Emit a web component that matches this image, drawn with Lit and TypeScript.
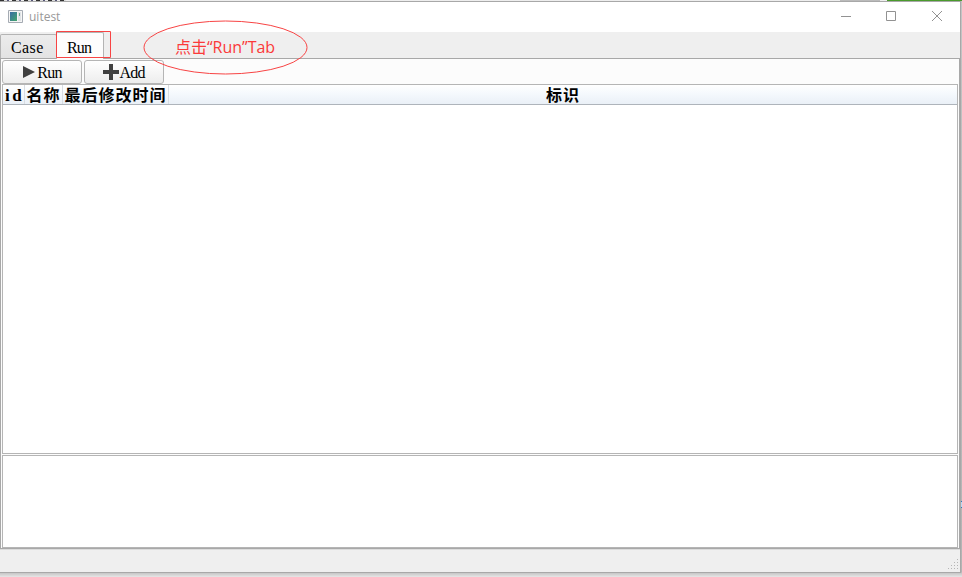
import { LitElement, html, css } from "lit";
import { customElement } from "lit/decorators.js";

@customElement("app-root")
export class AppRoot extends LitElement {
  static styles = css`
    * { box-sizing: border-box; }
    :host {
      display: flex;
      flex-direction: column;
      position: relative;
      width: 962px;
      height: 577px;
      overflow: hidden;
      background: linear-gradient(#c4c4c4 0, #b4b4b4 572px, #c6c6c6 573px, #e6e6e6 577px);
      color: #000;
      font-family: "Liberation Serif", "Noto Sans CJK SC", serif;
      font-size: 16px;
    }
    svg { display: block; }
    .behind { display: flex; height: 1px; flex: none; background: #eee; }
    .scraps { width: 66px; background: repeating-linear-gradient(90deg, #333 0 4px, #ddd 4px 7px, #557 7px 9px, #eee 9px 12px); }
    .grey { margin-left: 774px; width: 40px; background: #bbb; }
    .green { margin-left: 7px; width: 75px; background: #4a9a2c; }
    .window { display: flex; flex-direction: column; width: 961px; height: 572px; flex: none; border: solid #a8a8a8; border-width: 1px 1px 1px 0; background: #efefef; }
    .titlebar { display: flex; align-items: center; height: 30px; flex: none; background: #fff; padding-left: 8px; }
    .appicon { margin-top: -1px; }
    .title { margin-left: 6px; font: 12px/16px "Open Sans", "Noto Sans", sans-serif; color: #999; flex: 1; }
    .controls { display: flex; width: 136px; }
    .tabs { display: flex; height: 26px; flex: none; align-items: flex-end; }
    .tab { border: 1px solid #b4b4b4; border-bottom: 0; border-radius: 2px 2px 0 0; line-height: 26px; white-space: nowrap; }
    .case { width: 57px; height: 24px; padding-left: 10px; background: linear-gradient(#ececec, #e3e3e3); letter-spacing: .4px; }
    .run { width: 48px; height: 27px; margin-bottom: -1px; margin-left: -1px; padding-left: 10px; line-height: 29px; background: #fdfdfd; letter-spacing: -.8px; z-index: 1; position: relative; }
    .pane { display: flex; flex-direction: column; height: 491px; width: 960px; border: 1px solid #a8a8a8; background: #fcfcfc; padding: 1px; flex: none; }
    .tools { display: flex; gap: 2px; height: 24px; flex: none; }
    .btn { display: flex; align-items: center; justify-content: center; gap: 2px; width: 80px; height: 24px; border: 1px solid #b5b5b5; border-radius: 3px; background: linear-gradient(#fff, #ededed); letter-spacing: -.8px; line-height: 24px; }
    .btn.add { gap: 0; }
    .btn span { padding-top: 2px; }
    .table { height: 370px; width: 956px; flex: none; border: 1px solid #b5b5b5; background: #fff; }
    .head { display: grid; grid-template-columns: 22px 38px 106px 1fr; height: 20px; border-bottom: 1px solid #aeb4bb; background: linear-gradient(#fff, #f5f9fd 45%, #eaf0f7); }
    .cell { display: flex; justify-content: center; overflow: hidden; white-space: nowrap; line-height: 22px; font-weight: 700; letter-spacing: 1px; border-right: 1px solid #d8dde3; }
    .cell:last-child { border-right: 0; }
    .id { font-size: 17px; letter-spacing: 2.5px; padding-left: 2px; }
    .log { height: 93px; width: 956px; margin-top: 1px; flex: none; border: 1px solid #b5b5b5; background: #fff; }
    .status { display: flex; flex: 1; justify-content: flex-end; align-items: flex-end; border-top: 1px solid #dcdcdc; padding: 0 2px 2px 0; }
    .marks { position: absolute; left: 0; top: 0; z-index: 2; }
    .note { position: absolute; left: 175px; top: 37px; font: 16px/20px "Open Sans", "Noto Sans CJK SC", sans-serif; color: #fb3a3a; white-space: nowrap; z-index: 2; }
    .edge { position: absolute; right: 0; top: 501px; width: 1px; height: 7px; background: #b9d8ee; border: solid #3279b5; border-width: 1px 0; }
  `;

  render() {
    return html`
      <div class="behind"><div class="scraps"></div><div class="grey"></div><div class="green"></div></div>
      <div class="window">
        <div class="titlebar">
          <svg class="appicon" width="15" height="13" viewBox="0 0 15 13">
            <defs><linearGradient id="g" x2="1" y2="1"><stop stop-color="#396ca5"/><stop offset="1" stop-color="#42a66b"/></linearGradient></defs>
            <path d="M.5.5h14v12H.5z" fill="#f5f5f5" stroke="#a5abb3"/>
            <path d="M2 2h7v9H2z" fill="url(#g)"/><path d="M10 2h3v9h-3z" fill="#dfe3e6"/><path d="M11 3h1v3h-1z" fill="#6aa98d"/>
          </svg>
          <div class="title">uitest</div>
          <div class="controls">
            <svg width="136" height="30" viewBox="0 0 136 30" fill="none" stroke="#929292">
              <path d="M17 14.5h10M62.5 9.5h9v9h-9zM108 9l10 10M118 9l-10 10"/>
            </svg>
          </div>
        </div>
        <div class="tabs"><div class="tab case">Case</div><div class="tab run">Run</div></div>
        <div class="pane">
          <div class="tools">
            <div class="btn"><svg width="13" height="14" viewBox="0 0 13 14"><path d="M1 1v12l12-6z" fill="#404040"/></svg><span>Run</span></div>
            <div class="btn add"><svg width="16" height="16" viewBox="0 0 16 16"><path d="M6 0h4v6h6v4h-6v6H6v-6H0V6h6z" fill="#404040"/></svg><span>Add</span></div>
          </div>
          <div class="table">
            <div class="head"><div class="cell id">id</div><div class="cell">名称</div><div class="cell">最后修改时间</div><div class="cell">标识</div></div>
          </div>
          <div class="log"></div>
        </div>
        <div class="status">
          <svg width="11" height="11" viewBox="0 0 11 11" fill="#b5b5b5"><path d="M10 0h1v1h-1zM7 3h1v1H7zM10 3h1v1h-1zM4 6h1v1H4zM7 6h1v1H7zM10 6h1v1h-1zM1 9h1v1H1zM4 9h1v1H4zM7 9h1v1H7zM10 9h1v1h-1z"/></svg>
        </div>
      </div>
      <svg class="marks" width="320" height="80" fill="none" stroke="#f84444"><path d="M56.5 31.5h54v26h-54z"/><ellipse cx="225.5" cy="47.5" rx="81.5" ry="26.5"/></svg>
      <div class="note">点击“Run”Tab</div>
      <div class="edge"></div>
    `;
  }
}
